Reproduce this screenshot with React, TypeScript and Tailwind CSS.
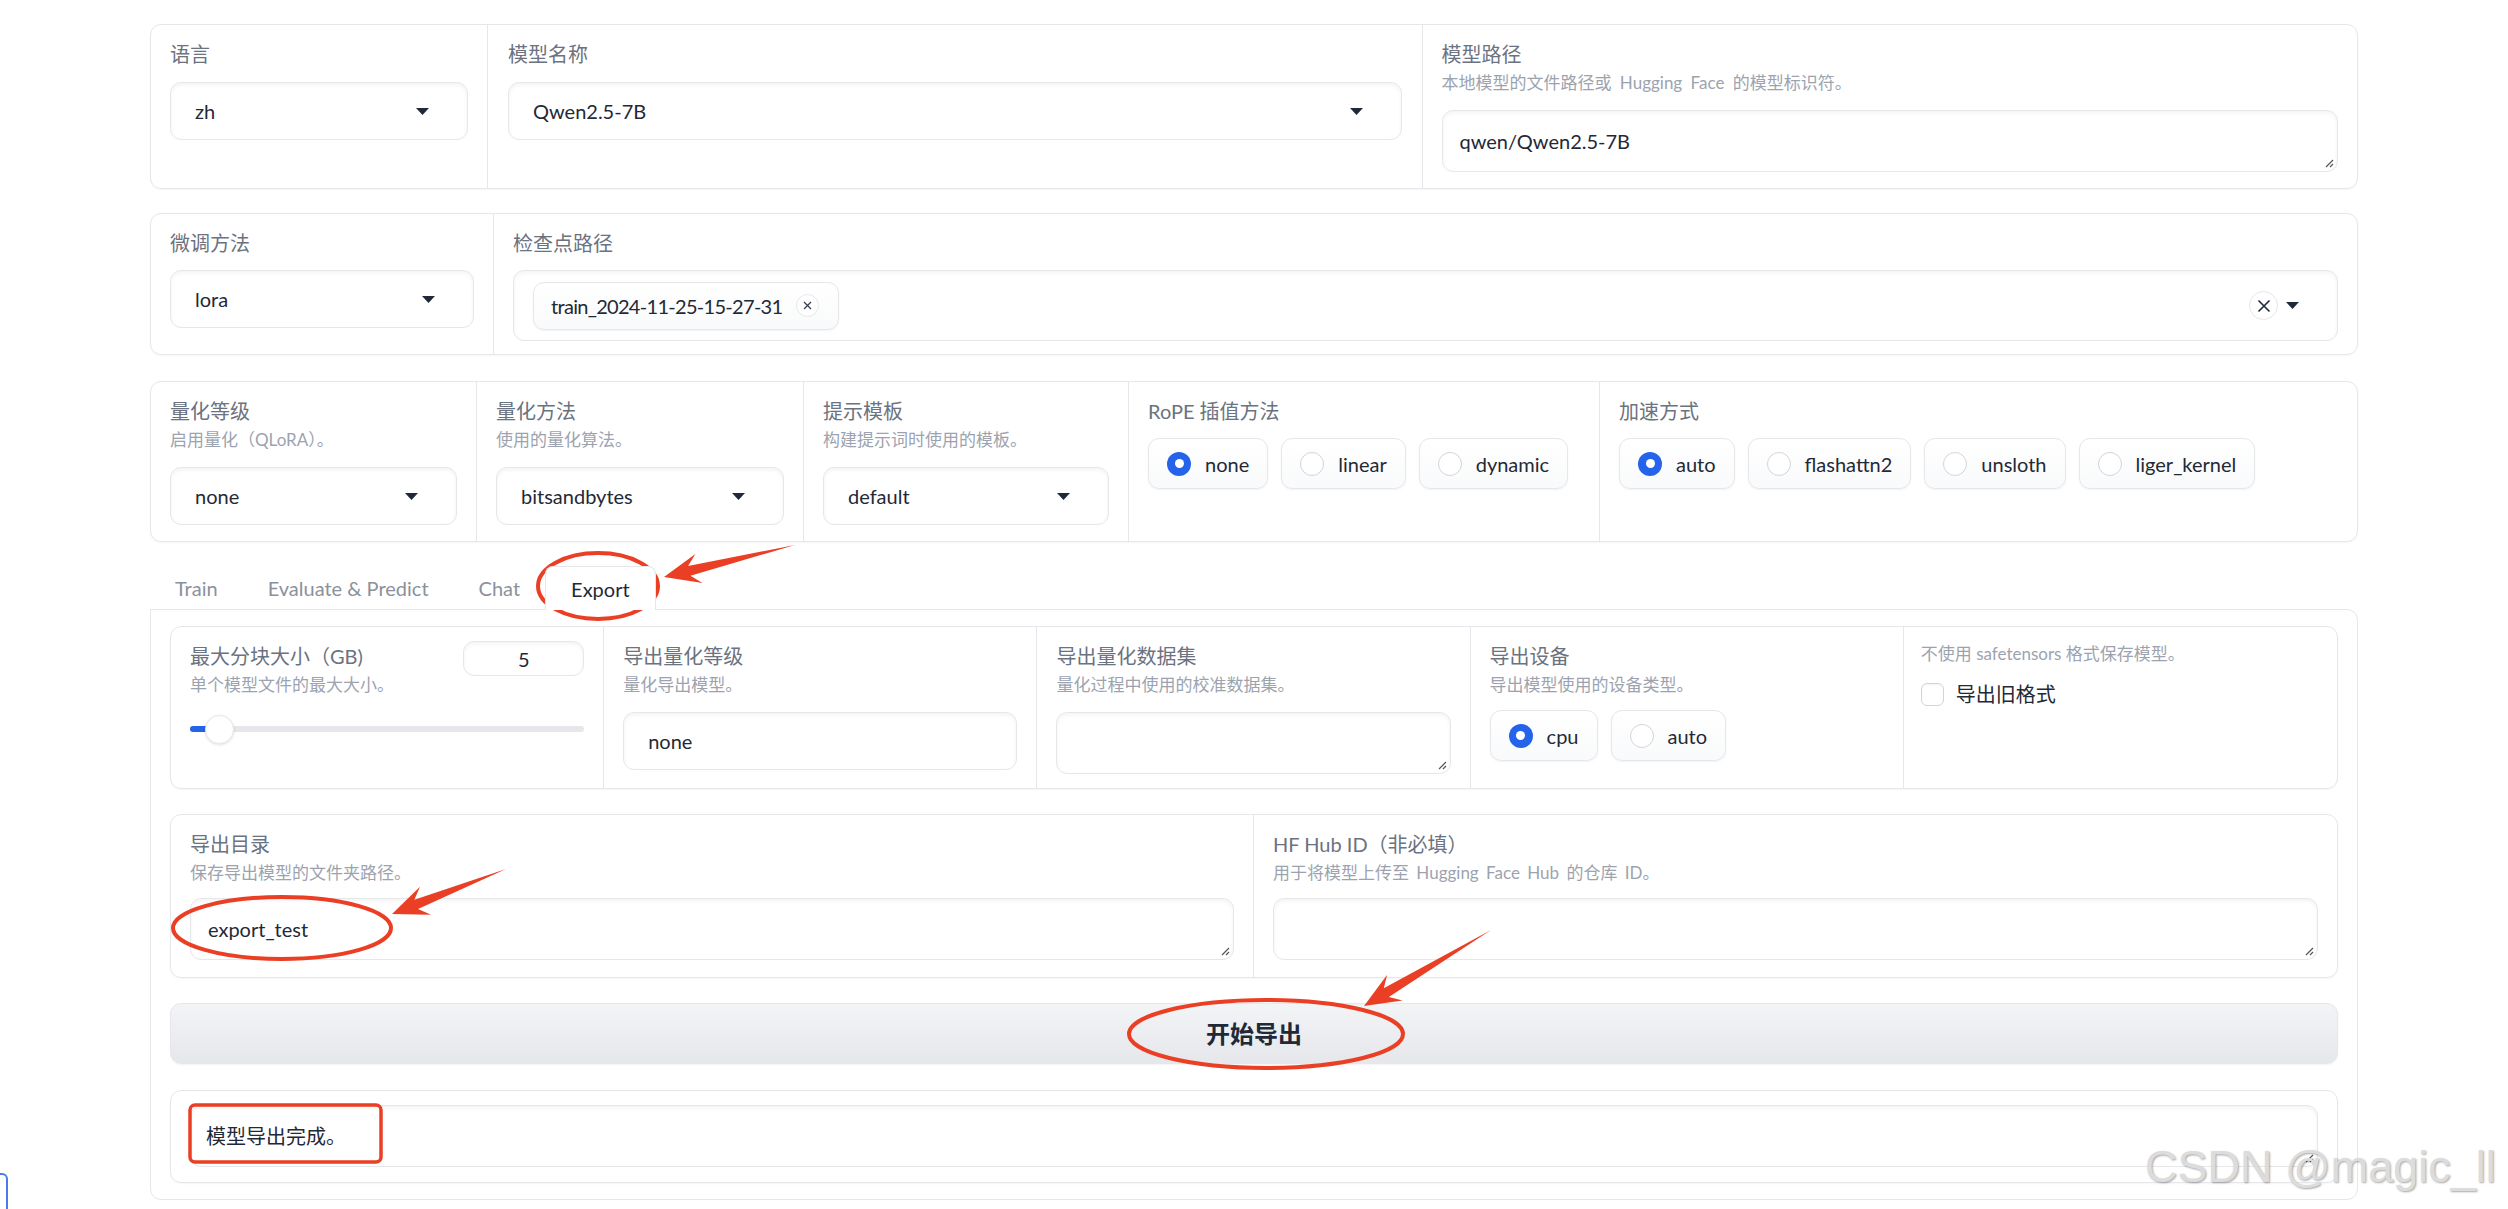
import React from 'react'

const FONT = "font-['Lato','Noto_Sans_CJK_SC',sans-serif]"
const LABEL = 'text-[20px] leading-[28px] text-[#6b7280]'
const INFO = 'mt-[3px] text-[17px] leading-[24px] text-[#9ca3af]'
const FIELD = 'rounded-[11px] border border-[#e5e7eb] bg-white shadow-[inset_0_2px_4px_rgba(0,0,0,0.05)]'

function Caret() {
  return (
    <svg width="13" height="7" viewBox="0 0 13 7">
      <path d="M0 0H13L6.5 7Z" fill="#1f2937" />
    </svg>
  )
}

function Resize() {
  return (
    <svg className="absolute bottom-[3px] right-[3px]" width="10" height="10" viewBox="0 0 10 10">
      <path d="M9 2L2 9M9 6L6 9" stroke="#555" strokeWidth="1.2" />
    </svg>
  )
}

function Select({ value, caret = true, className = '' }: { value: string; caret?: boolean; className?: string }) {
  return (
    <div className={`${FIELD} flex h-[58px] items-center justify-between pl-[24px] pr-[38px] text-[20px] text-[#1f2937] ${className}`}>
      <span>{value}</span>
      {caret && <Caret />}
    </div>
  )
}

function TextArea({ value = '', className = '' }: { value?: string; className?: string }) {
  return (
    <div className={`${FIELD} relative flex h-[62px] items-center px-[17px] text-[20px] text-[#1f2937] ${className}`}>
      {value}
      <Resize />
    </div>
  )
}

function Radio({ label, checked }: { label: string; checked?: boolean }) {
  return (
    <div className="flex h-[51px] items-center gap-[14px] rounded-[11px] border border-[#e5e7eb] bg-linear-to-t from-[#f9fafb] to-white px-[18px] text-[20px] text-[#1f2937] shadow-[0_1px_2px_rgba(0,0,0,0.05)]">
      {checked ? (
        <span className="flex h-[24px] w-[24px] items-center justify-center rounded-full bg-[#2563eb]">
          <span className="h-[9px] w-[9px] rounded-full bg-white" />
        </span>
      ) : (
        <span className="h-[24px] w-[24px] rounded-full border border-[#d1d5db] bg-white" />
      )}
      {label}
    </div>
  )
}

function arrow(tx: number, ty: number, hx: number, hy: number) {
  const dx = hx - tx
  const dy = hy - ty
  const L = Math.hypot(dx, dy)
  const ux = dx / L
  const uy = dy / L
  const nx = -uy
  const ny = ux
  const at = (d: number, w: number) => `${tx + ux * d + nx * w},${ty + uy * d + ny * w}`
  return [
    at(0, 0),
    at(L - 26, 5),
    at(L - 36, 15),
    at(L, 0),
    at(L - 36, -15),
    at(L - 26, -5),
  ].join(' ')
}

function Annotations() {
  const red = '#ea3f24'
  return (
    <svg className="pointer-events-none absolute left-0 top-0" width="2508" height="1209" viewBox="0 0 2508 1209">
      <g fill="none" stroke={red} strokeWidth="4">
        <ellipse cx="598" cy="586" rx="60" ry="33" />
        <ellipse cx="282" cy="928" rx="109" ry="31" />
        <ellipse cx="1266" cy="1034" rx="137" ry="34" />
        <rect x="190" y="1105" width="191" height="57" rx="5" strokeWidth="3.5" />
      </g>
      <g fill={red}>
        <polygon points={arrow(795, 545, 664, 577)} />
        <polygon points={arrow(506, 869, 392, 914)} />
        <polygon points={arrow(1491, 930, 1364, 1006)} />
      </g>
    </svg>
  )
}

export default function App() {
  return (
    <div className={`relative h-[1209px] w-[2508px] overflow-hidden bg-white ${FONT}`}>
      <div className="ml-[150px] flex w-[2208px] flex-col pt-[24px]">
        {/* row 1 */}
        <div className="grid h-[165px] grid-cols-[337px_1fr_1fr] divide-x divide-[#e5e7eb] rounded-[11px] border border-[#e5e7eb] shadow-[0_1px_2px_rgba(0,0,0,0.04)]">
          <div className="px-[19px] pt-[15px]">
            <div className={LABEL}>语言</div>
            <Select value="zh" className="mt-[14px]" />
          </div>
          <div className="px-[20px] pt-[15px]">
            <div className={LABEL}>模型名称</div>
            <Select value="Qwen2.5-7B" className="mt-[14px]" />
          </div>
          <div className="px-[19px] pt-[15px]">
            <div className={LABEL}>模型路径</div>
            <div className={`${INFO} [word-spacing:4px]`}>本地模型的文件路径或 Hugging Face 的模型标识符。</div>
            <TextArea value="qwen/Qwen2.5-7B" className="mt-[15px]" />
          </div>
        </div>

        {/* row 2 */}
        <div className="mt-[24px] grid h-[142px] grid-cols-[343px_1fr] divide-x divide-[#e5e7eb] rounded-[11px] border border-[#e5e7eb] shadow-[0_1px_2px_rgba(0,0,0,0.04)]">
          <div className="px-[19px] pt-[15px]">
            <div className={LABEL}>微调方法</div>
            <Select value="lora" className="mt-[13px]" />
          </div>
          <div className="px-[19px] pt-[15px]">
            <div className={LABEL}>检查点路径</div>
            <div className={`${FIELD} mt-[13px] flex h-[71px] items-center justify-between pl-[19px] pr-[38px]`}>
              <div className="flex h-[48px] items-center gap-[14px] rounded-[11px] border border-[#e5e7eb] bg-linear-to-t from-[#f9fafb] to-white pl-[17px] pr-[19px] text-[20px] tracking-[-0.7px] text-[#1f2937] shadow-[0_1px_2px_rgba(0,0,0,0.05)]">
                train_2024-11-25-15-27-31
                <span className="flex h-[23px] w-[23px] items-center justify-center rounded-full border border-[#e5e7eb] bg-white">
                  <svg width="9" height="9" viewBox="0 0 9 9">
                    <path d="M1 1L8 8M8 1L1 8" stroke="#374151" strokeWidth="1.3" />
                  </svg>
                </span>
              </div>
              <div className="flex items-center gap-[8px]">
                <span className="flex h-[29px] w-[29px] items-center justify-center rounded-full border border-[#e5e7eb] bg-white">
                  <svg width="14" height="14" viewBox="0 0 14 14">
                    <path d="M1.5 1.5L12.5 12.5M12.5 1.5L1.5 12.5" stroke="#1f2937" strokeWidth="1.6" />
                  </svg>
                </span>
                <Caret />
              </div>
            </div>
          </div>
        </div>

        {/* row 3 */}
        <div className="mt-[26px] grid h-[161px] grid-cols-[326px_327px_325px_471px_1fr] divide-x divide-[#e5e7eb] rounded-[11px] border border-[#e5e7eb] shadow-[0_1px_2px_rgba(0,0,0,0.04)]">
          <div className="px-[19px] pt-[15px]">
            <div className={LABEL}>量化等级</div>
            <div className={INFO}>启用量化（QLoRA）。</div>
            <Select value="none" className="mt-[15px]" />
          </div>
          <div className="px-[19px] pt-[15px]">
            <div className={LABEL}>量化方法</div>
            <div className={INFO}>使用的量化算法。</div>
            <Select value="bitsandbytes" className="mt-[15px]" />
          </div>
          <div className="px-[19px] pt-[15px]">
            <div className={LABEL}>提示模板</div>
            <div className={INFO}>构建提示词时使用的模板。</div>
            <Select value="default" className="mt-[15px]" />
          </div>
          <div className="px-[19px] pt-[15px]">
            <div className={LABEL}>RoPE 插值方法</div>
            <div className="mt-[13px] flex gap-[13px]">
              <Radio label="none" checked />
              <Radio label="linear" />
              <Radio label="dynamic" />
            </div>
          </div>
          <div className="px-[19px] pt-[15px]">
            <div className={LABEL}>加速方式</div>
            <div className="mt-[13px] flex gap-[13px]">
              <Radio label="auto" checked />
              <Radio label="flashattn2" />
              <Radio label="unsloth" />
              <Radio label="liger_kernel" />
            </div>
          </div>
        </div>

        {/* tabs */}
        <div className="mt-[24px] flex h-[43px] items-start text-[20px] text-[#8b919c]">
          <div className="flex h-[43px] items-center px-[25px]">Train</div>
          <div className="flex h-[43px] items-center px-[25px]">Evaluate &amp; Predict</div>
          <div className="flex h-[43px] items-center px-[25px]">Chat</div>
          <div className="relative z-10 flex h-[44px] items-center rounded-t-[8px] border-x border-t border-[#e5e7eb] bg-white px-[25px] text-[#1f2937]">
            Export
          </div>
        </div>

        {/* panel */}
        <div className="flex h-[591px] flex-col rounded-b-[11px] rounded-tr-[11px] border border-[#e5e7eb] px-[19px] pt-[16px]">
          {/* export options */}
          <div className="grid h-[163px] grid-cols-5 divide-x divide-[#e5e7eb] rounded-[11px] border border-[#e5e7eb] shadow-[0_1px_2px_rgba(0,0,0,0.04)]">
            <div className="px-[19px] pt-[15px]">
              <div className="flex h-[28px] items-start justify-between">
                <div className={LABEL}>最大分块大小（GB)</div>
                <div className={`${FIELD} -mt-[1px] flex h-[35px] w-[121px] items-center justify-center text-[20px] text-[#1f2937]`}>5</div>
              </div>
              <div className={INFO}>单个模型文件的最大大小。</div>
              <div className="relative mt-[18px] h-[29px]">
                <div className="absolute left-0 right-0 top-[11px] h-[6px] rounded-full bg-[#e5e7eb]" />
                <div className="absolute left-0 top-[11px] h-[6px] w-[22px] rounded-full bg-[#2563eb]" />
                <div className="absolute left-[15px] top-0 h-[29px] w-[29px] rounded-full border border-[#e5e7eb] bg-white shadow-[0_1px_3px_rgba(0,0,0,0.12)]" />
              </div>
            </div>
            <div className="px-[19px] pt-[15px]">
              <div className={LABEL}>导出量化等级</div>
              <div className={INFO}>量化导出模型。</div>
              <Select value="none" caret={false} className="mt-[15px]" />
            </div>
            <div className="px-[19px] pt-[15px]">
              <div className={LABEL}>导出量化数据集</div>
              <div className={INFO}>量化过程中使用的校准数据集。</div>
              <TextArea className="mt-[15px]" />
            </div>
            <div className="px-[19px] pt-[15px]">
              <div className={LABEL}>导出设备</div>
              <div className={INFO}>导出模型使用的设备类型。</div>
              <div className="mt-[13px] flex gap-[13px]">
                <Radio label="cpu" checked />
                <Radio label="auto" />
              </div>
            </div>
            <div className="px-[17px] pt-[15px]">
              <div className="text-[17px] leading-[24px] text-[#9ca3af]">不使用 safetensors 格式保存模型。</div>
              <div className="mt-[14px] flex items-center gap-[12px] text-[20px] leading-[28px] text-[#1f2937]">
                <span className="h-[23px] w-[23px] rounded-[6px] border border-[#d1d5db] bg-white shadow-[inset_0_1px_2px_rgba(0,0,0,0.05)]" />
                导出旧格式
              </div>
            </div>
          </div>

          {/* dirs */}
          <div className="mt-[25px] grid h-[164px] grid-cols-2 divide-x divide-[#e5e7eb] rounded-[11px] border border-[#e5e7eb] shadow-[0_1px_2px_rgba(0,0,0,0.04)]">
            <div className="px-[19px] pt-[15px]">
              <div className={LABEL}>导出目录</div>
              <div className={INFO}>保存导出模型的文件夹路径。</div>
              <TextArea value="export_test" className="mt-[13px]" />
            </div>
            <div className="px-[19px] pt-[15px]">
              <div className={LABEL}>HF Hub ID（非必填）</div>
              <div className={`${INFO} [word-spacing:3px]`}>用于将模型上传至 Hugging Face Hub 的仓库 ID。</div>
              <TextArea className="mt-[13px]" />
            </div>
          </div>

          {/* action */}
          <div className="mt-[25px] flex h-[61px] items-center justify-center rounded-[11px] border border-[#e5e7eb] bg-linear-to-b from-[#f3f4f6] to-[#e5e7eb] text-[24px] font-bold text-[#1f2937] shadow-[0_1px_2px_rgba(0,0,0,0.05)]">
            开始导出
          </div>

          {/* output */}
          <div className="mt-[26px] h-[93px] rounded-[11px] border border-[#e5e7eb] px-[19px] pt-[14px] shadow-[0_1px_2px_rgba(0,0,0,0.04)]">
            <div className={`${FIELD} relative flex h-[62px] items-center px-[15px] text-[20px] text-[#1f2937]`}>
              模型导出完成。
              <Resize />
            </div>
          </div>
        </div>
      </div>

      <Annotations />

      <div className="absolute left-[-6px] top-[1173px] h-[44px] w-[14px] rounded-r-[6px] border-2 border-[#4b7be8]" />

      <div className="pointer-events-none absolute left-[2145px] top-[1144px] whitespace-nowrap font-['Liberation_Sans',sans-serif] text-[45px] leading-[1] text-[#dcdcdc] [text-shadow:1px_1px_2px_rgba(0,0,0,0.35)]">
        CSDN @magic_ll
      </div>
    </div>
  )
}
